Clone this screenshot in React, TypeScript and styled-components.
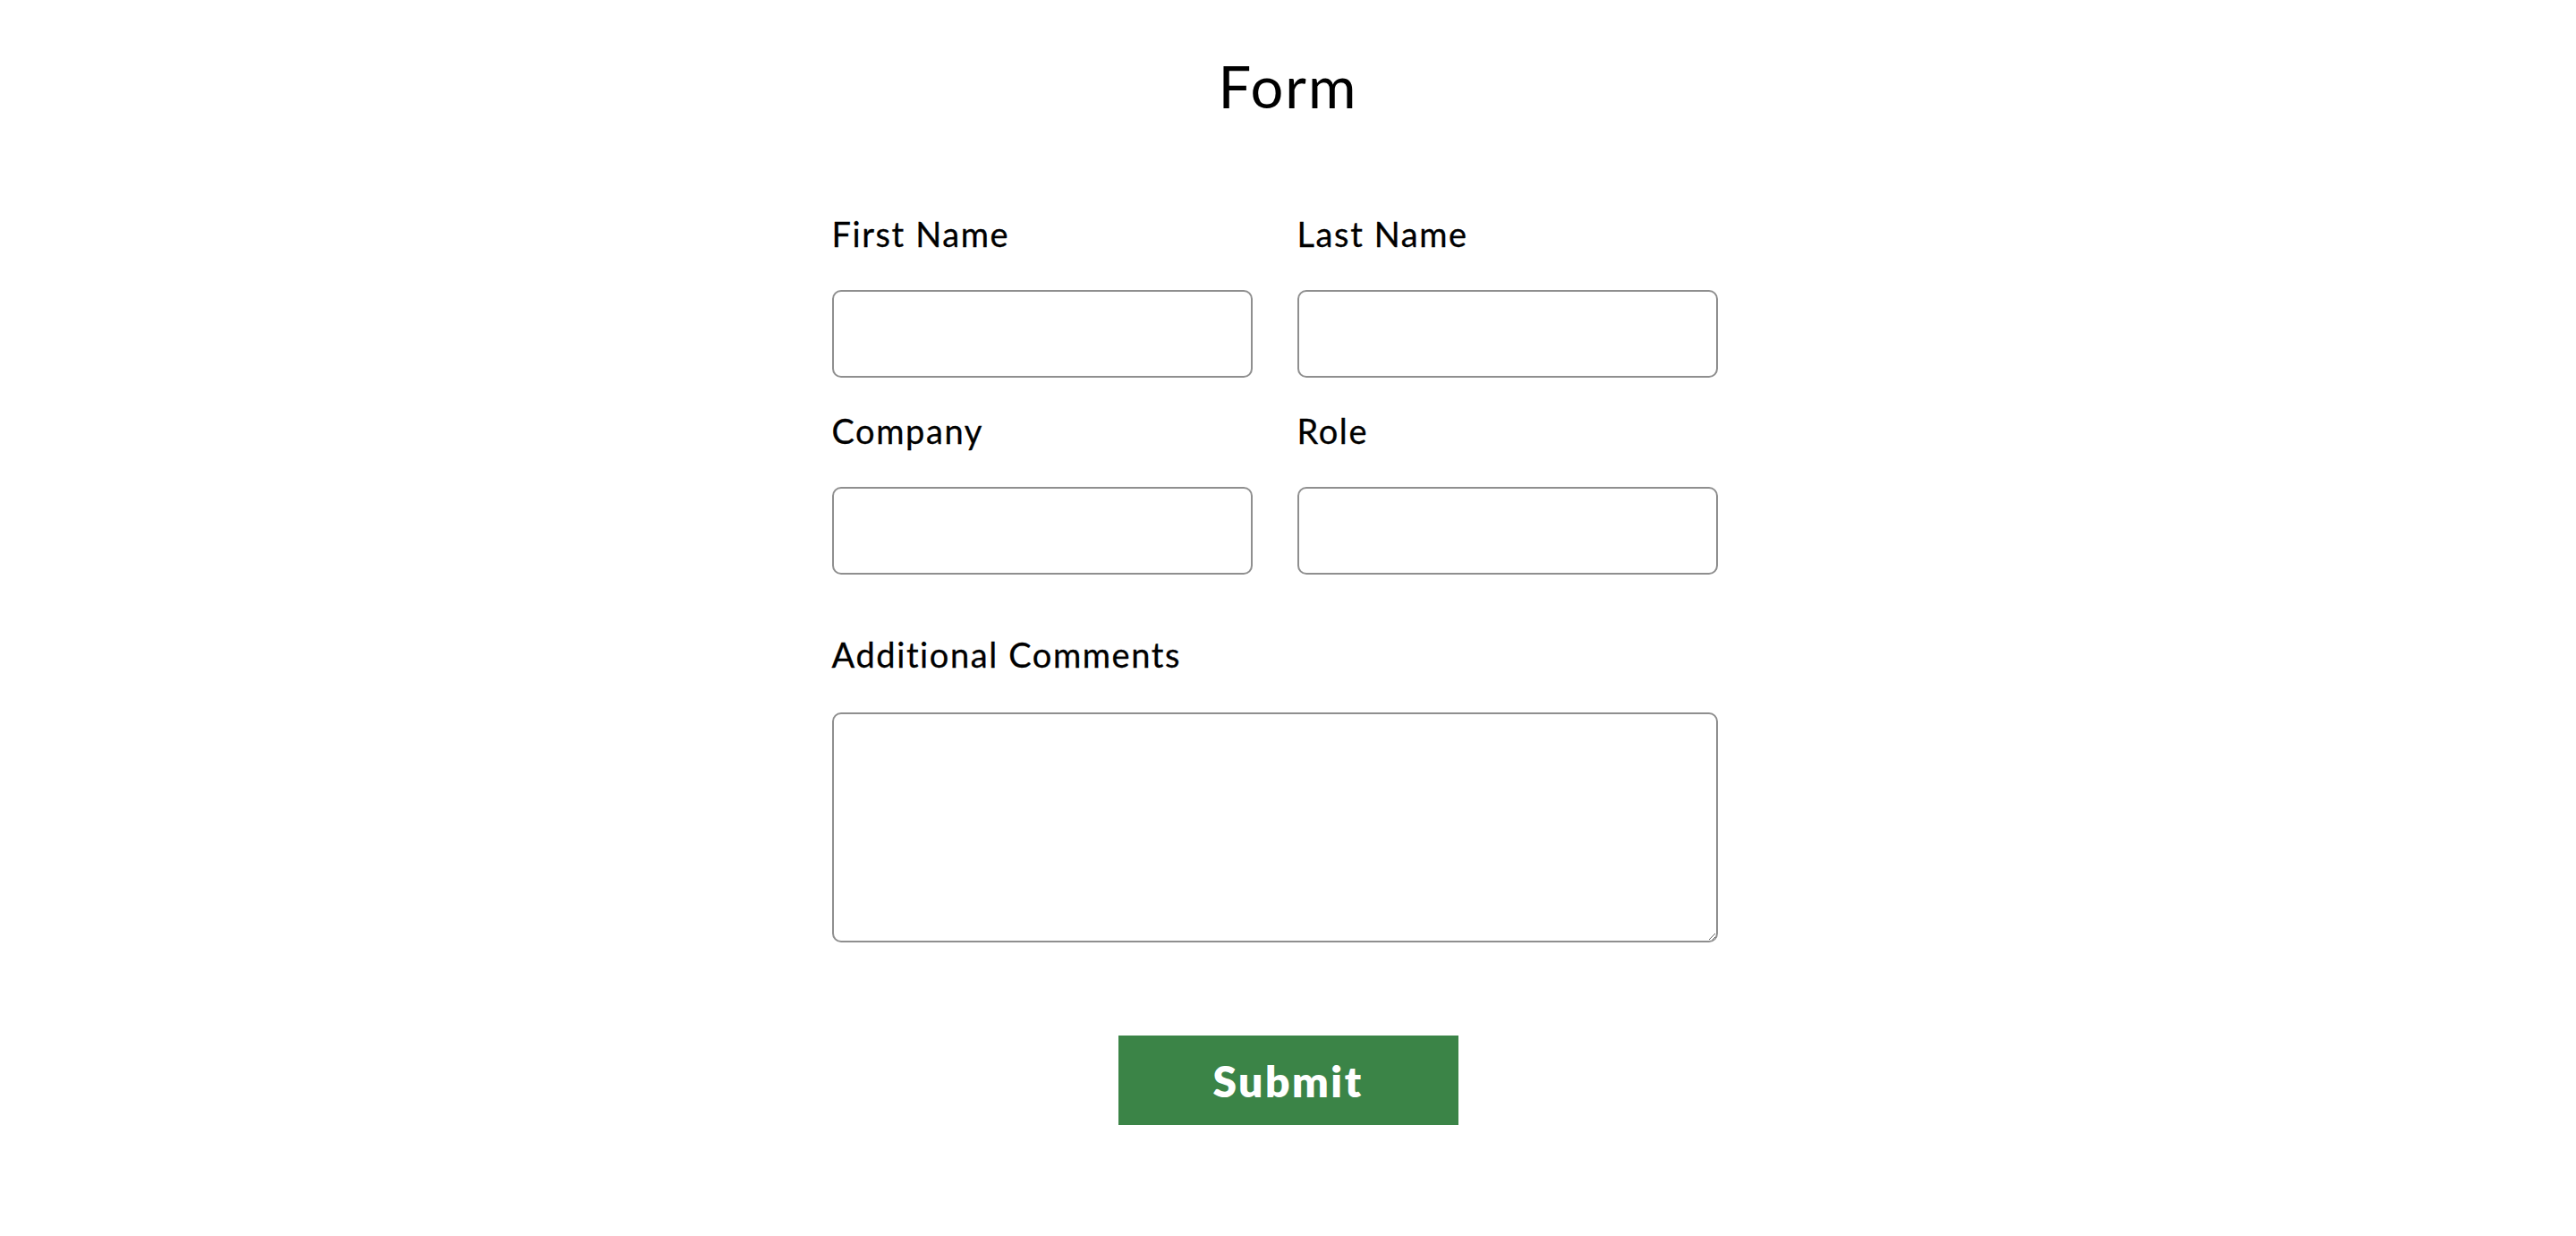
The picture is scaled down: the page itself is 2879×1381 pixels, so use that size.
import styled, { createGlobalStyle } from 'styled-components';

const GlobalStyle = createGlobalStyle`
  body {
    margin: 0;
    background: #fff;
    font-family: Lato, "Noto Sans", sans-serif;
    color: #000;
  }
`;

const Page = styled.div`
  display: flex;
  flex-direction: column;
  align-items: center;
  padding-top: 64px;
  padding-bottom: 80px;
`;

const Title = styled.h1`
  margin: 0;
  font-size: 65px;
  line-height: 64px;
  font-weight: 400;
  letter-spacing: 2px;
`;

const FormBox = styled.form`
  width: 1020px;
  margin-top: 110px;
  display: flex;
  flex-direction: column;
`;

const Grid = styled.div`
  width: 990px;
  display: grid;
  grid-template-columns: 470px 470px;
  column-gap: 50px;
  row-gap: 36px;
`;

const Field = styled.div<{ $top?: number; $gap?: number }>`
  display: flex;
  flex-direction: column;
  gap: ${(p) => p.$gap ?? 40}px;
  margin-top: ${(p) => p.$top ?? 0}px;
  width: 990px;

  ${Grid} & {
    width: auto;
  }
`;

const Label = styled.label`
  font-size: 38px;
  line-height: 46px;
  font-weight: 400;
  letter-spacing: 1.6px;
  -webkit-text-stroke: 0.3px #000;
`;

const TextInput = styled.input`
  box-sizing: border-box;
  width: 100%;
  height: 98px;
  border: 2px solid #8f8f8f;
  border-radius: 10px;
  padding: 0 16px;
  font-family: inherit;
  font-size: 32px;
  outline: none;
`;

const Comments = styled.textarea`
  box-sizing: border-box;
  width: 100%;
  height: 257px;
  border: 2px solid #8f8f8f;
  border-radius: 10px;
  padding: 12px 16px;
  font-family: inherit;
  font-size: 32px;
  outline: none;
`;

const SubmitButton = styled.button`
  align-self: center;
  margin-top: 104px;
  width: 380px;
  height: 100px;
  border: none;
  border-radius: 0;
  background-color: #3b8447;
  color: #fff;
  font-family: inherit;
  font-size: 48px;
  font-weight: 800;
  letter-spacing: 2.5px;
  cursor: pointer;
`;

const fields = [
  { id: 'first', label: 'First Name' },
  { id: 'last', label: 'Last Name' },
  { id: 'company', label: 'Company' },
  { id: 'role', label: 'Role' },
];

const App = () => {
  return (
    <>
      <GlobalStyle />
      <Page>
        <Title>Form</Title>
        <FormBox onSubmit={(e) => e.preventDefault()}>
          <Grid>
            {fields.map((f) => (
              <Field key={f.id}>
                <Label htmlFor={f.id}>{f.label}</Label>
                <TextInput id={f.id} type="text" />
              </Field>
            ))}
          </Grid>
          <Field $top={66} $gap={42}>
            <Label htmlFor="comments">Additional Comments</Label>
            <Comments id="comments" />
          </Field>
          <SubmitButton type="submit">Submit</SubmitButton>
        </FormBox>
      </Page>
    </>
  );
};

export default App;
